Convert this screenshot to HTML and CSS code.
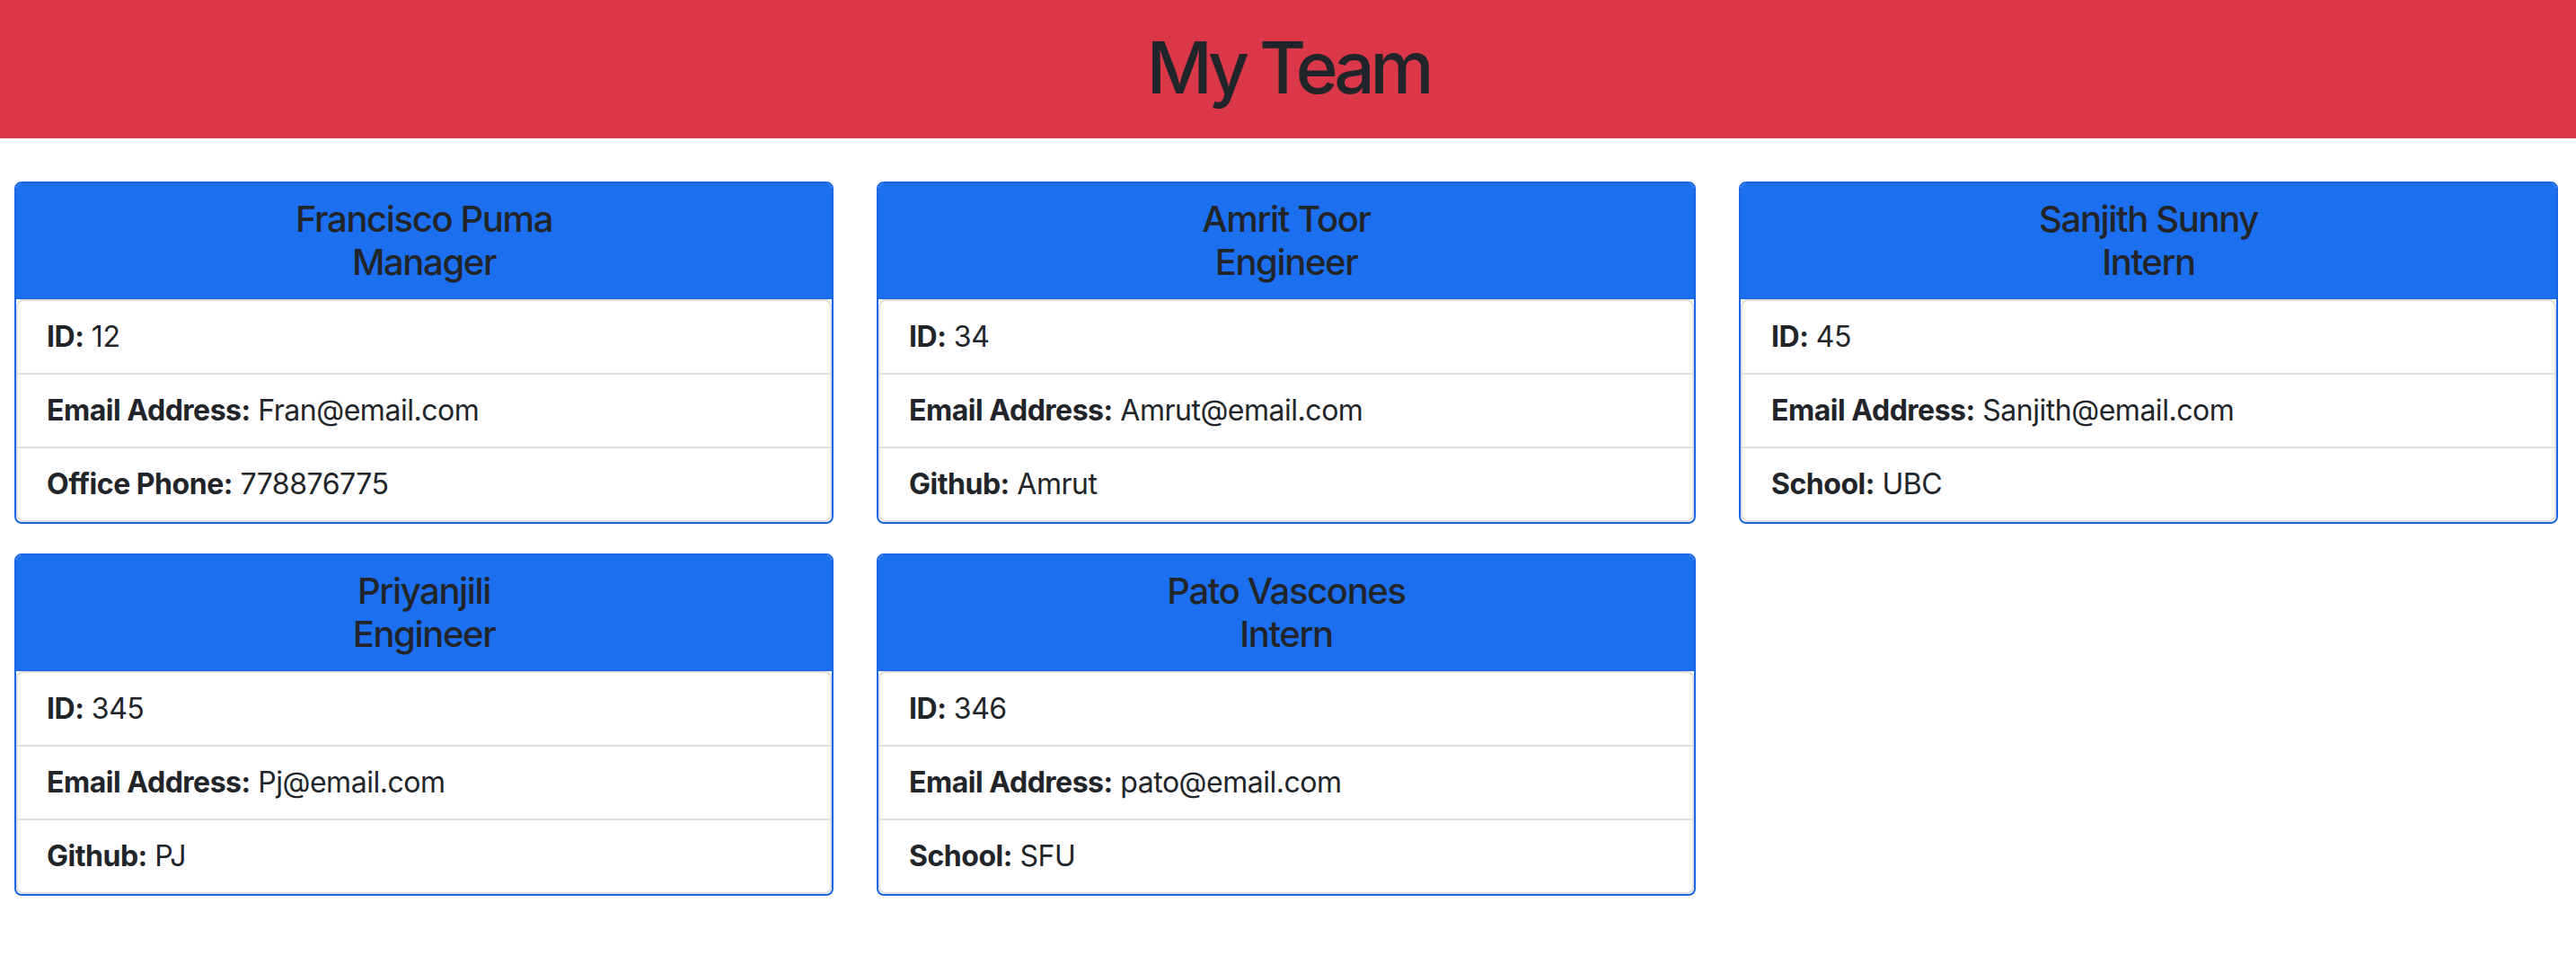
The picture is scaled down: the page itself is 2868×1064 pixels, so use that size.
FILE: index.html
```html
<!DOCTYPE html>
<html lang="en">
<head>
<meta charset="utf-8">
<title>My Team</title>
<link rel="stylesheet" href="styles.css">
</head>
<body>
<header class="banner">
  <h1 class="banner-title">My Team</h1>
</header>
<main class="team">
  <article class="card">
    <div class="card-header"><h5 class="card-title">Francisco Puma<br>Manager</h5></div>
    <ul class="info">
      <li class="info-item"><strong>ID:</strong> 12</li>
      <li class="info-item"><strong>Email Address:</strong> Fran@email.com</li>
      <li class="info-item"><strong>Office Phone:</strong> 778876775</li>
    </ul>
  </article>
  <article class="card">
    <div class="card-header"><h5 class="card-title">Amrit Toor<br>Engineer</h5></div>
    <ul class="info">
      <li class="info-item"><strong>ID:</strong> 34</li>
      <li class="info-item"><strong>Email Address:</strong> Amrut@email.com</li>
      <li class="info-item"><strong>Github:</strong> Amrut</li>
    </ul>
  </article>
  <article class="card">
    <div class="card-header"><h5 class="card-title">Sanjith Sunny<br>Intern</h5></div>
    <ul class="info">
      <li class="info-item"><strong>ID:</strong> 45</li>
      <li class="info-item"><strong>Email Address:</strong> Sanjith@email.com</li>
      <li class="info-item"><strong>School:</strong> UBC</li>
    </ul>
  </article>
  <article class="card">
    <div class="card-header"><h5 class="card-title">Priyanjili<br>Engineer</h5></div>
    <ul class="info">
      <li class="info-item"><strong>ID:</strong> 345</li>
      <li class="info-item"><strong>Email Address:</strong> Pj@email.com</li>
      <li class="info-item"><strong>Github:</strong> PJ</li>
    </ul>
  </article>
  <article class="card">
    <div class="card-header"><h5 class="card-title">Pato Vascones<br>Intern</h5></div>
    <ul class="info">
      <li class="info-item"><strong>ID:</strong> 346</li>
      <li class="info-item"><strong>Email Address:</strong> pato@email.com</li>
      <li class="info-item"><strong>School:</strong> SFU</li>
    </ul>
  </article>
</main>
</body>
</html>
```

FILE: styles.css
```css
* { box-sizing: border-box; }

body {
  margin: 0;
  font-family: Inter, "Noto Sans", "Liberation Sans", sans-serif;
  color: #212529;
  background: #ffffff;
}

.banner {
  background: #da3749;
  height: 154px;
  padding-bottom: 4px;
  display: flex;
  align-items: center;
  justify-content: center;
}

.banner-title {
  margin: 0;
  font-size: 80px;
  font-weight: 500;
  line-height: 1.2;
  letter-spacing: -0.065em;
  color: #212529;
}

.team {
  display: grid;
  grid-template-columns: repeat(3, 912px);
  column-gap: 48px;
  row-gap: 33px;
  padding: 48px 16px;
  align-items: start;
}

.card {
  border: 2px solid #1a66e2;
  border-radius: 8px;
  overflow: hidden;
  background: #ffffff;
}

.card-header {
  background: #1c6fee;
  padding: 16px 32px;
  text-align: center;
  border-bottom: 1px solid #1a62d6;
}

.card-title {
  margin: 0;
  font-size: 40px;
  line-height: 48px;
  font-weight: 500;
  letter-spacing: -0.034em;
}

.info {
  list-style: none;
  margin: 0;
  padding: 0;
  border: 2px solid #dedede;
  border-radius: 8px;
  background: #ffffff;
}

.info-item {
  padding: 16px 32px;
  font-size: 32px;
  line-height: 48px;
  letter-spacing: -0.015em;
}

.info-item + .info-item {
  border-top: 2px solid #dedede;
}

.info-item strong {
  font-weight: 700;
}
```
